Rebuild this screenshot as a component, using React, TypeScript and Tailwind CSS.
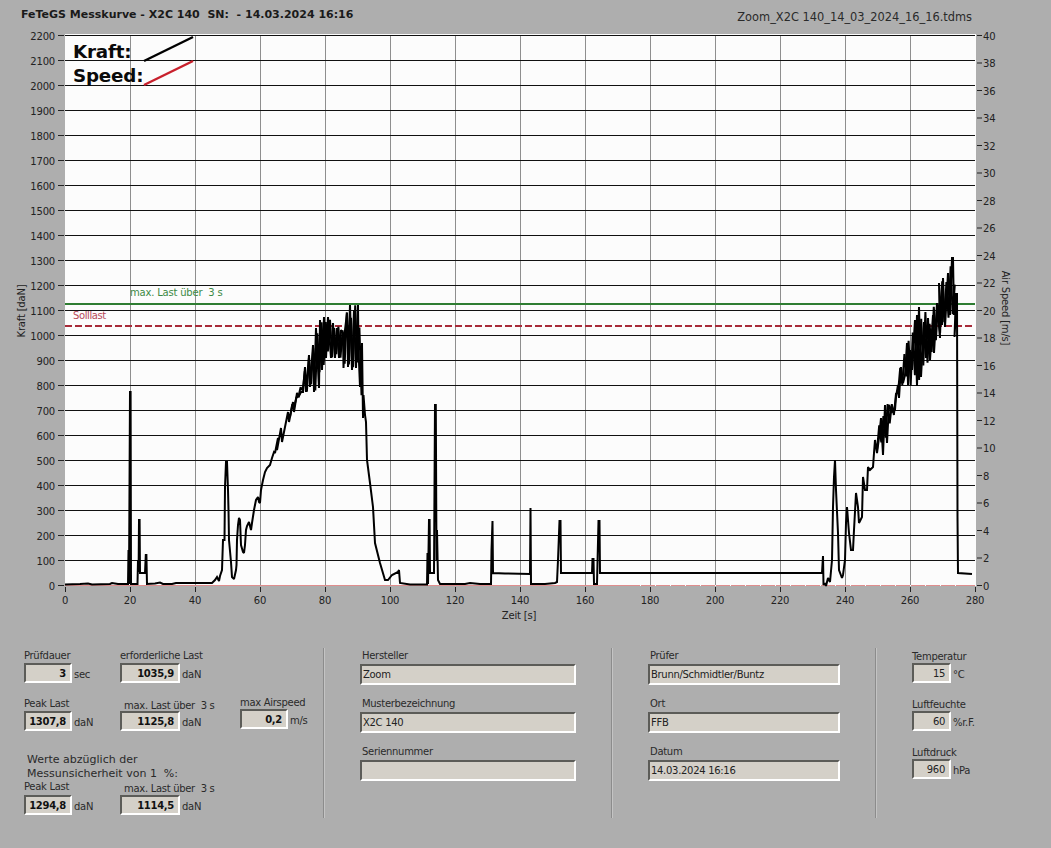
const F = "font-['DejaVu_Sans',sans-serif]";

const curve: number[][] = [
  [65,584.5],[80,584],[88,583.5],[92,584.5],[110,584],[112,583],[118,584],[128,584],[128.5,550],[129,584],[130,392],[130.6,392],[131,584],[137.5,584],[138,560],[138.6,572],[139,520],[139.6,520],[140,573],[145,573],[145.8,555],[146.4,555],[147,584],
  [155,583.5],[160,582.5],[163,584],[172,584],[176,583],[195,583],[212,583],[215,580],[217,577],[219,581],[220,576],[222,570],[223,540],[224.5,540],[225,487],[226,462],[227,462],[228,490],[228.5,510],[229,540],[231,562],[232,577],[234,579],[236,570],[236.5,565],[237,540],[238,525],[239,518],[240,520],[241,545],[243,552],[244,553],[245,545],[246,530],[247,526],[249,522],[250,526],[251,530],[252,523],[254,510],[256,500],[258,497],[259,502],[260,503],[261,490],[263,480],[265,472],[267,468],[270,465],[272,458],[274,452],[275,453],[278,438],[277,450],[281,428],[282,442],[285,427],[284,432],[288,412],[289,422],[293,402],[294,412],[297,393],[299,396],[301,392],[303,392],[305,367],[306,392],[309,355],[310,387],[313,345],[314,392],[316,328],[319,388],[320,320],[322,370],[324,317],[326,358],[328,317],[331,358],[333,323],[335,358],[337,328],[339,358],[341,330],[343,333],[343.5,368],[345,330],[347,313],[348,367],[350,305],[352,370],[354,310],[356,368],[358,305],[358.5,350],[360,387],[362,343],[363,418],[363.5,395],[365,415],[366,422],[367,460],[370,483],[373,507],[375,543],[380,563],[385,580],[388,580],[392,575],[398,572],[399,570],[400,583],[410,584.5],[427,584.5],[427.5,553],[428,584],[429,520],[429.6,520],[430,573],[434,573],[435,405],[435.8,405],[436.5,560],[437,530],[438,580],[440,584],[465,584],[470,583],[480,584],[491,584],[491.5,550],[492.5,521],[493,573],[505,573.5],[530,574],[530.5,508],[531,584],[545,584],[555,583],[557,582],[558,560],[559.5,521],[560.5,521],[561,573],[592,573],[592.5,559],[593.5,559],[594,584],[597,584],[598.5,521],[599.5,521],[600,573],[822,573],[823,556],[823.5,585],[825,583],[826,586],[828,578],[830,582],[832,560],[833,507],[834,477],[835,460],[836,490],[838,533],[839,570],[842,578],[843,575],[845,560],[846,523],[847,507],[849,533],[851,550],[853,550],[854,530],[856,493],[858,507],[859,523],[862,517],[863,477],[865,490],[867,490],[868,467],[870,470],[873,467],[874,453],[875,440],[877,453],[879,438],[881,418],[883,455],[885,405],[887,443],[889,405],[892,412],[895,410],[896,397],[898,385],[899,398],[901,367],[903,383],[905,375],[907,343],[908,385],[910,350],[912,370],[915,320],[917,386],[919,307],[921,377],[924,322],[926,358],[928,318],[930,360],[933,315],[934,353],[937,303],[940,338],[939,283],[942,325],[943,278],[945,327],[948,273],[950,315],[952,258],[953,258],[954,315],[956,293],[954.5,337],[957,293],[957.5,517],[958,573],[972,574],
];

function lerp(list: number[][], x: number) {
  for (let i = 1; i < list.length; i++) {
    if (x <= list[i][0]) {
      const [x0, y0] = list[i - 1];
      const [x1, y1] = list[i];
      return y0 + ((y1 - y0) * (x - x0)) / (x1 - x0);
    }
  }
  return list[list.length - 1][1];
}

function dense(upper: number[][], lower: number[][], step: number) {
  const out: string[] = [];
  const start = upper[0][0];
  const end = upper[upper.length - 1][0];
  let i = 0;
  for (let x = start; x <= end; x += step) {
    const u = lerp(upper, x);
    const l = lerp(lower, x);
    const mid = (u + l) / 2;
    const k = 0.55 + 0.45 * Math.abs(Math.sin(i * 2.3));
    const y = i % 2 === 0 ? mid - ((mid - u) * k) : mid + ((l - mid) * k);
    out.push(`${x.toFixed(1)},${y.toFixed(1)}`);
    i++;
  }
  return out.join(" ");
}

const ramp1 = dense(
  [[288,412],[300,390],[305,367],[313,345],[320,320],[328,317],[340,328],[350,305],[358,305],[362,343]],
  [[288,422],[300,393],[306,392],[314,392],[320,385],[325,358],[340,358],[345,368],[352,370],[358,370],[362,400]],
  2.1,
);
const ramp2 = dense(
  [[875,440],[885,405],[895,400],[900,367],[907,343],[915,320],[919,307],[930,315],[937,300],[943,278],[948,273],[953,258],[956,293]],
  [[875,453],[885,440],[895,412],[900,385],[908,385],[917,386],[921,377],[930,360],[937,340],[945,327],[950,315],[956,337]],
  2.1,
);

const leftTicks = Array.from({ length: 23 }, (_, i) => i);
const rightTicks = Array.from({ length: 21 }, (_, i) => i);
const xTicks = Array.from({ length: 15 }, (_, i) => i);

function Chart() {
  return (
    <svg viewBox="0 30 1051 600" className="block w-[1051px] h-[600px] shrink-0 tracking-[-0.2px]" fontFamily="'DejaVu Sans', sans-serif">
      <rect x="65" y="34" width="911" height="552" fill="#fcfcfc" />
      {xTicks.slice(1, -1).map((i) => (
        <line key={i} x1={65.5 + i * 65} x2={65.5 + i * 65} y1="35" y2="586" stroke="#8e8e8e" strokeWidth="1" />
      ))}
      {leftTicks.slice(1).map((i) => (
        <line key={i} x1="65" x2="975" y1={585.5 - i * 25} y2={585.5 - i * 25} stroke="#111" strokeWidth="1" />
      ))}
      {leftTicks.map((i) => (
        <g key={i}>
          <line x1="58" x2="64" y1={585.5 - i * 25} y2={585.5 - i * 25} stroke="#222" />
          <text x="55" y={589.5 - i * 25} textAnchor="end" fontSize="10" fill="#222">{i * 100}</text>
        </g>
      ))}
      {rightTicks.map((i) => (
        <g key={i}>
          <line x1="977" x2="982" y1={585.5 - i * 27.5} y2={585.5 - i * 27.5} stroke="#222" />
          <text x="983" y={589.5 - i * 27.5} fontSize="10" fill="#222">{i * 2}</text>
        </g>
      ))}
      {xTicks.map((i) => (
        <g key={i}>
          <line x1={65.5 + i * 65} x2={65.5 + i * 65} y1="587" y2="592" stroke="#222" />
          <text x={65 + i * 65} y="604" textAnchor="middle" fontSize="10" fill="#222">{i * 20}</text>
        </g>
      ))}
      <text x="519" y="619" textAnchor="middle" fontSize="10" fill="#222">Zeit [s]</text>
      <text transform="translate(25 311) rotate(-90)" textAnchor="middle" fontSize="10" fill="#222">Kraft [daN]</text>
      <text transform="translate(1002 308) rotate(90)" textAnchor="middle" fontSize="10" fill="#222">Air Speed [m/s]</text>

      <text x="73" y="58" fontSize="18.3" fontWeight="700" fill="#0a0a0a">Kraft:</text>
      <text x="73" y="82" fontSize="18.3" fontWeight="700" fill="#0a0a0a">Speed:</text>
      <line x1="144" y1="61" x2="193" y2="37" stroke="#000" strokeWidth="2.5" />
      <line x1="144" y1="85" x2="193" y2="61" stroke="#c8202c" strokeWidth="2.5" />

      <line x1="65" x2="975" y1="304" y2="304" stroke="#2e7d32" strokeWidth="2" />
      <line x1="65" x2="975" y1="326" y2="326" stroke="#a82a38" strokeWidth="2" strokeDasharray="7 3" />
      <text x="130" y="296" fontSize="10" fill="#3c8a44" className="whitespace-pre">max. Last über  3 s</text>
      <text x="73" y="319" fontSize="10" fill="#b84a5a" className="tracking-[-0.4px]">Solllast</text>

      <line x1="65" x2="975" y1="585.5" y2="585.5" stroke="#e08e8e" strokeWidth="1" />
      <line x1="640" x2="970" y1="585.5" y2="585.5" stroke="#ffffff" strokeWidth="1" strokeDasharray="1 14" />
      <polyline points={curve.map((p) => p.join(",")).join(" ")} fill="none" stroke="#000" strokeWidth="2" strokeLinejoin="miter" strokeMiterlimit="2" />
      <polyline points={ramp1} fill="none" stroke="#000" strokeWidth="2" strokeLinejoin="miter" strokeMiterlimit="2" />
      <polyline points={ramp2} fill="none" stroke="#000" strokeWidth="2" strokeLinejoin="miter" strokeMiterlimit="2" />
    </svg>
  );
}

function Box({ w, h, value, bold, align }: { w: string; h: string; value?: string; bold?: boolean; align?: "left" | "right" }) {
  return (
    <div
      className={`${w} ${h} shrink-0 bg-[#d4d0c8] border-t-2 border-l-2 border-b-2 border-r-2 border-t-[#5c5c58] border-l-[#5c5c58] border-b-white border-r-white flex items-center overflow-hidden whitespace-pre text-[10px] ${
        align === "left" ? "justify-start pl-[1px]" : "justify-end pr-[4px]"
      } ${bold ? "font-bold text-[#111]" : "text-[#222]"}`}
    >
      {value}
    </div>
  );
}

function Measure({ label, value, unit, w, bold, pl, lead }: { label: string; value: string; unit: string; w: string; bold?: boolean; pl?: string; lead?: string }) {
  return (
    <div className="flex flex-col shrink-0">
      <div className={`h-[14px] whitespace-pre ${lead ?? "leading-[14px]"} ${pl ?? ""}`}>{label}</div>
      <div className="flex items-center">
        <Box w={w} h="h-[20px]" value={value} bold={bold} />
        <span className="ml-[2px] mt-[3px]">{unit}</span>
      </div>
    </div>
  );
}

function TextField({ label, value }: { label: string; value?: string }) {
  return (
    <div className="flex flex-col">
      <div className="h-[16px] leading-[15px] pl-[2px]">{label}</div>
      <Box w="w-full" h="h-[21px]" value={value} align="left" />
    </div>
  );
}

function Divider() {
  return <div className="w-[2px] h-[170px] shrink-0 bg-[#8c8c8c] border-r border-r-[#c4c4c4]" />;
}

export default function App() {
  return (
    <div className={`w-[1051px] h-[848px] overflow-hidden bg-[#aeaeae] flex flex-col text-[10px] tracking-[-0.3px] text-[#2a2a2a] ${F}`}>
      <div className="h-[30px] shrink-0 flex justify-between pl-[21px] pr-[79px] tracking-normal">
        <div className="mt-[8px] h-[14px] leading-[14px] text-[11px] font-bold text-[#1a1a1a] whitespace-pre">FeTeGS Messkurve - X2C 140  SN:  - 14.03.2024 16:16</div>
        <div className="mt-[10px] h-[14px] leading-[14px] text-[11.4px] text-[#2a2a2a] whitespace-pre">Zoom_X2C 140_14_03_2024_16_16.tdms</div>
      </div>
      <Chart />
      <div className="flex items-start gap-[35px] pl-[24px] pt-[18px]">
        <div className="w-[264px] shrink-0 pt-[1px] flex flex-col">
          <div className="flex items-start">
            <div className="w-[96px] shrink-0"><Measure label="Prüfdauer" value="3" unit="sec" w="w-[48px]" bold /></div>
            <Measure label="erforderliche Last" value="1035,9" unit="daN" w="w-[60px]" bold />
          </div>
          <div className="flex items-start mt-[14px]">
            <div className="w-[96px] shrink-0"><Measure label="Peak Last" value="1307,8" unit="daN" w="w-[48px]" bold /></div>
            <div className="w-[120px] shrink-0"><Measure label="max. Last über  3 s" value="1125,8" unit="daN" w="w-[60px]" bold pl="pl-[4px]" lead="leading-[17px]" /></div>
            <div className="-mt-[2px] shrink-0"><Measure label="max Airspeed" value="0,2" unit="m/s" w="w-[48px]" bold lead="leading-[16px]" /></div>
          </div>
          <div className="mt-[22px] pl-[3px] leading-[14px] text-[11px] tracking-normal">
            <div>Werte abzüglich der</div>
            <div className="whitespace-pre">Messunsicherheit von 1  %:</div>
          </div>
          <div className="flex items-start">
            <div className="w-[96px] shrink-0"><Measure label="Peak Last" value="1294,8" unit="daN" w="w-[48px]" bold lead="leading-[12px]" /></div>
            <Measure label="max. Last über  3 s" value="1114,5" unit="daN" w="w-[60px]" bold pl="pl-[4px]" lead="leading-[16px]" />
          </div>
        </div>
        <Divider />
        <div className="w-[216px] shrink-0 flex flex-col gap-[11px]">
          <TextField label="Hersteller" value="Zoom" />
          <TextField label="Musterbezeichnung" value="X2C 140" />
          <TextField label="Seriennummer" />
        </div>
        <Divider />
        <div className="w-[192px] shrink-0 flex flex-col gap-[11px]">
          <TextField label="Prüfer" value="Brunn/Schmidtler/Buntz" />
          <TextField label="Ort" value="FFB" />
          <TextField label="Datum" value="14.03.2024 16:16" />
        </div>
        <Divider />
        <div className="pt-[1px] flex flex-col gap-[14px]">
          <Measure label="Temperatur" value="15" unit="°C" w="w-[39px]" lead="leading-[15px]" />
          <Measure label="Luftfeuchte" value="60" unit="%r.F." w="w-[39px]" lead="leading-[15px]" />
          <Measure label="Luftdruck" value="960" unit="hPa" w="w-[39px]" lead="leading-[15px]" />
        </div>
      </div>
    </div>
  );
}
